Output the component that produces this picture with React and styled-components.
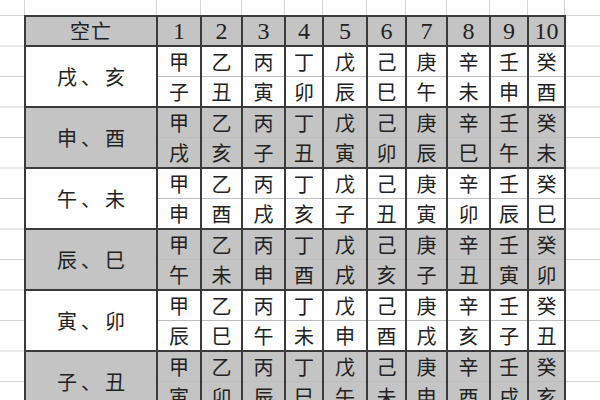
import React from "react";
import styled, { createGlobalStyle } from "styled-components";

const GlobalStyle = createGlobalStyle`
  html, body {
    margin: 0;
    padding: 0;
    background: #fff;
  }
  body {
    font-family: "Liberation Serif", "Noto Sans CJK SC", serif;
    color: #222;
  }
`;

const COLS = [132, 44, 41, 43, 38, 44, 39, 41, 43, 38, 37];
const STEMS = "甲乙丙丁戊己庚辛壬癸".split("");
const BRANCHES = "子丑寅卯辰巳午未申酉戌亥".split("");
const GROUPS = ["戌、亥", "申、酉", "午、未", "辰、巳", "寅、卯", "子、丑"];

const Sheet = styled.div`
  width: 600px;
  height: 400px;
  overflow: hidden;
  background-color: #fff;
  background-image: linear-gradient(to bottom, #d4d4d4 0 1px, transparent 1px);
  background-size: 100% 30.5px;
  background-position: 0 15px;
  background-repeat: repeat-y;
`;

const TopStrip = styled.div`
  display: flex;
  height: 15px;
  background: #fff;
`;

const StripCell = styled.div`
  flex: 0 0 ${(p) => p.$w}px;
  box-sizing: border-box;
  height: 15px;
  border-right: 1px solid #d4d4d4;
`;

const Body = styled.div`
  display: flex;
`;

const Gutter = styled.div`
  flex: 0 0 24px;
`;

const Table = styled.table`
  border-collapse: collapse;
  table-layout: fixed;
  width: 541px;
  border: 2px solid #3a3a3a;
  background: #fff;
`;

const HeadRow = styled.tr`
  height: 30px;
`;

const SubRow = styled.tr`
  height: 30.5px;
`;

const HeadCell = styled.th`
  background: #c4c4c4;
  border: 2px solid #3a3a3a;
  padding: 0;
  font-weight: normal;
  text-align: center;
  vertical-align: middle;
  font-size: ${(p) => (p.$cjk ? "20px" : "24px")};
  font-family: ${(p) =>
    p.$cjk ? '"Noto Sans CJK SC", sans-serif' : '"Liberation Serif", serif'};
  line-height: 1;
  letter-spacing: ${(p) => (p.$cjk ? "1px" : "0")};
  color: #222;
`;

const LabelCell = styled.td`
  background: ${(p) => (p.$shaded ? "#c4c4c4" : "#fff")};
  border: 2px solid #3a3a3a;
  padding: 0 0 0 4px;
  text-align: center;
  vertical-align: middle;
  font-family: "Noto Sans CJK SC", sans-serif;
  font-size: 20px;
  letter-spacing: 4px;
  line-height: 1;
  color: #222;
`;

const Cell = styled.td`
  background: ${(p) => (p.$shaded ? "#c4c4c4" : "#fff")};
  border-left: 2px solid #3a3a3a;
  border-right: 2px solid #3a3a3a;
  border-top: ${(p) => (p.$top ? "2px solid #3a3a3a" : "1px solid #bdbdbd")};
  border-bottom: ${(p) => (p.$top ? "1px solid #bdbdbd" : "2px solid #3a3a3a")};
  padding: 0;
  text-align: center;
  vertical-align: middle;
  font-family: "Noto Sans CJK SC", sans-serif;
  font-size: 20px;
  line-height: 1;
  color: #222;
`;

export default function App() {
  return (
    <>
      <GlobalStyle />
      <Sheet>
        <TopStrip>
          <StripCell $w={25} />
          {COLS.map((w, i) => (
            <StripCell key={i} $w={w} />
          ))}
        </TopStrip>
        <Body>
          <Gutter />
          <Table>
            <colgroup>
              {COLS.map((w, i) => (
                <col key={i} style={{ width: w }} />
              ))}
            </colgroup>
            <thead>
              <HeadRow>
                <HeadCell $cjk>空亡</HeadCell>
                {STEMS.map((_, i) => (
                  <HeadCell key={i}>{i + 1}</HeadCell>
                ))}
              </HeadRow>
            </thead>
            <tbody>
              {GROUPS.map((label, g) => {
                // each decade starts two branches earlier than the last
                const start = (10 * g) % 12;
                const shaded = g % 2 === 1;
                return (
                  <React.Fragment key={label}>
                    <SubRow>
                      <LabelCell rowSpan={2} $shaded={shaded}>
                        {label}
                      </LabelCell>
                      {STEMS.map((s) => (
                        <Cell key={s} $top $shaded={shaded}>
                          {s}
                        </Cell>
                      ))}
                    </SubRow>
                    <SubRow>
                      {STEMS.map((s, i) => (
                        <Cell key={s} $shaded={shaded}>
                          {BRANCHES[(start + i) % 12]}
                        </Cell>
                      ))}
                    </SubRow>
                  </React.Fragment>
                );
              })}
            </tbody>
          </Table>
        </Body>
      </Sheet>
    </>
  );
}
